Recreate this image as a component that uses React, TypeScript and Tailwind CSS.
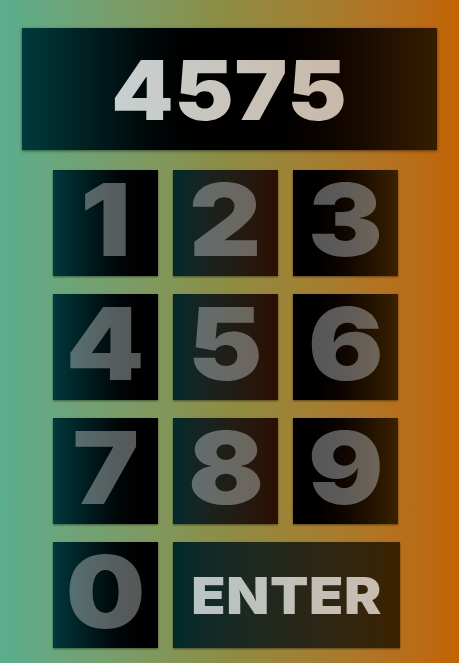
const keys = [
  { label: "1", bg: "bg-gradient-to-r from-[#01383c] to-[#000000]" },
  { label: "2", bg: "bg-gradient-to-r from-[#012a2c] to-[#2b0f02]" },
  { label: "3", bg: "bg-gradient-to-r from-[#000000] to-[#3a2100]" },
  { label: "4", bg: "bg-gradient-to-r from-[#01383c] to-[#000000]" },
  { label: "5", bg: "bg-gradient-to-r from-[#012a2c] to-[#2b0f02]" },
  { label: "6", bg: "bg-gradient-to-r from-[#000000] to-[#3a2100]" },
  { label: "7", bg: "bg-gradient-to-r from-[#01383c] to-[#000000]" },
  { label: "8", bg: "bg-gradient-to-r from-[#012a2c] to-[#2b0f02]" },
  { label: "9", bg: "bg-gradient-to-r from-[#000000] to-[#3a2100]" },
  { label: "0", bg: "bg-gradient-to-r from-[#01383c] to-[#000000]" },
];

export default function App() {
  return (
    <div
      className="w-full h-[663px] overflow-hidden bg-gradient-to-r from-[#58ae8e] via-[#8d8c42] to-[#c26300] pt-[28px]"
      style={{ fontFamily: "Inter, 'Liberation Sans', sans-serif" }}
    >
      <div className="mx-[22px] h-[122px] flex items-center justify-center bg-gradient-to-r from-[#003b3d] via-[#000000] to-[#371d00] shadow-[0_1px_3px_rgba(0,0,0,0.5)]">
        <span className="inline-block scale-x-[1.07] text-[83px] font-black leading-none tracking-[0.01em] bg-gradient-to-r from-[#c8d0d1] to-[#c9b8a8] bg-clip-text text-transparent pt-[2px]">
          4575
        </span>
      </div>

      <div className="ml-[53px] mt-[20px] grid grid-cols-[105px_105px_105px] auto-rows-[106px] gap-x-[15px] gap-y-[18px]">
        {keys.map((key) => (
          <button
            key={key.label}
            className={`${key.bg} flex items-center justify-center shadow-[0_1px_2px_rgba(0,0,0,0.45)]`}
          >
            <span className="inline-block scale-x-[1.12] text-[100px] font-black leading-none text-[rgba(205,210,210,0.42)] -mt-[6px]">
              {key.label}
            </span>
          </button>
        ))}
        <button className="col-span-2 w-[227px] bg-gradient-to-r from-[#012a2c] to-[#3b2200] flex items-center justify-center shadow-[0_1px_2px_rgba(0,0,0,0.45)]">
          <span className="inline-block scale-x-[1.1] text-[51px] font-black leading-none tracking-[0.01em] bg-gradient-to-r from-[#b9c4c4] to-[#c8bcb0] bg-clip-text text-transparent">
            ENTER
          </span>
        </button>
      </div>
    </div>
  );
}
